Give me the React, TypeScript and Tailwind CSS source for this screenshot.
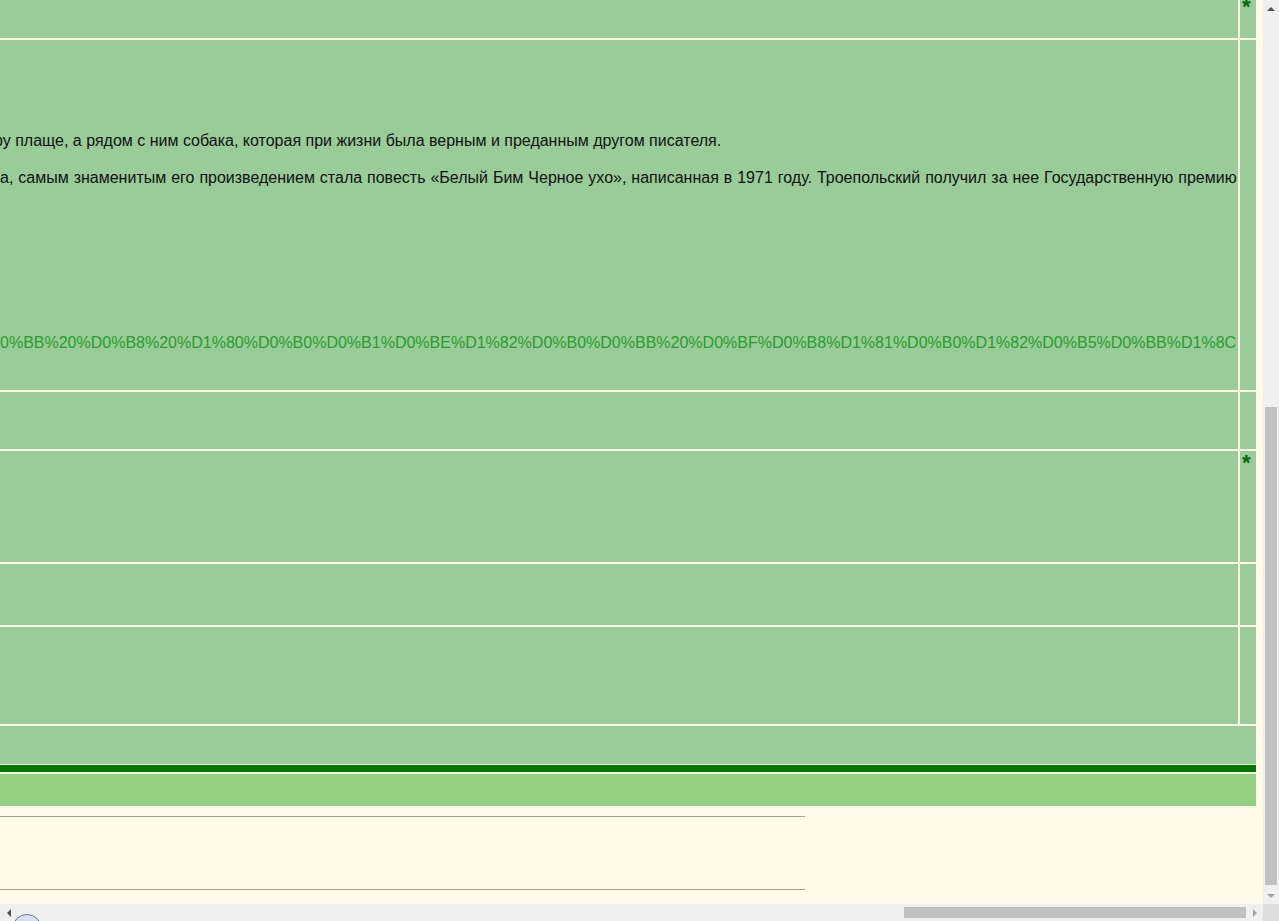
import React from 'react';

const cream = 'bg-[#fffbe6]';

const Star: React.FC<{ top: string }> = ({ top }) => (
  <span className={`absolute left-[2px] ${top} text-[22px] font-bold leading-none text-[#006600]`}>*</span>
);

const Row: React.FC<{ h: string; star?: boolean; children?: React.ReactNode }> = ({ h, star, children }) => (
  <div className={`flex gap-[2px] ${h}`}>
    <div className="flex-1 min-w-0 overflow-hidden bg-[#99cc99]">{children}</div>
    <div className="w-[16px] bg-[#99cc99] relative overflow-hidden">
      {star && <Star top="top-[1px]" />}
    </div>
  </div>
);

const App: React.FC = () => {
  return (
    <div className="w-[1279px] h-[921px] overflow-hidden flex flex-col relative" style={{ fontFamily: '"Liberation Sans", Arial, sans-serif' }}>
      <div className="flex flex-1 min-h-0">
        {/* Page content */}
        <div className={`flex-1 min-w-0 overflow-hidden ${cream}`}>
          <div className="w-[1256px] flex flex-col">
            {/* Main table */}
            <div className={`flex flex-col gap-[2px] ${cream}`}>
              <div className="flex gap-[2px] h-[38px]">
                <div className="flex-1 bg-[#99cc99]" />
                <div className="w-[16px] bg-[#99cc99] relative overflow-hidden">
                  <Star top="top-[-4px]" />
                </div>
              </div>
              <Row h="h-[350px]">
                <div className="text-[16px] text-[#111] whitespace-nowrap">
                  <p className="pt-[92px] ml-[-6px] leading-[18px]">
                    ру плаще, а рядом с ним собака, которая при жизни была верным и преданным другом писателя.
                  </p>
                  <p className="mt-[19px] leading-[18px] [word-spacing:0.5px]">
                    а, самым знаменитым его произведением стала повесть «Белый Бим Черное ухо», написанная в 1971 году. Троепольский получил за нее Государственную премию
                  </p>
                  <p className="mt-[147px] leading-[18px] text-[#2a9d2a]">
                    0%BB%20%D0%B8%20%D1%80%D0%B0%D0%B1%D0%BE%D1%82%D0%B0%D0%BB%20%D0%BF%D0%B8%D1%81%D0%B0%D1%82%D0%B5%D0%BB%D1%8C
                  </p>
                </div>
              </Row>
              <Row h="h-[57px]" />
              <Row h="h-[111px]" star />
              <Row h="h-[61px]" />
              <Row h="h-[97px]" />
              <div className="h-0" />
            </div>
            <div className="h-[38px] bg-[#99cc99]" />
            <div className="h-[1px]" />
            <div className="h-[7px] bg-[#007700]" />
            <div className="h-[2px]" />
            <div className="h-[32px] bg-[#93d080]" />
            <div className="w-[805px] mt-[10px] h-[74px] border-t border-b border-[#a59f98]" />
          </div>
        </div>
        {/* Vertical scrollbar */}
        <div className="w-[16px] bg-[#f0f0f0] flex flex-col items-center">
          <div className="h-[17px] flex items-center justify-center">
            <div className="w-0 h-0 border-l-[4px] border-r-[4px] border-b-[4px] border-l-transparent border-r-transparent border-b-[#505050]" />
          </div>
          <div className="flex-1 w-full relative">
            <div className="absolute left-[2px] right-[2px] top-[390px] bottom-[2px] bg-[#c1c1c1]" />
          </div>
          <div className="h-[17px] flex items-center justify-center">
            <div className="w-0 h-0 border-l-[4px] border-r-[4px] border-t-[4px] border-l-transparent border-r-transparent border-t-[#a3a3a3]" />
          </div>
        </div>
      </div>
      {/* Horizontal scrollbar */}
      <div className="h-[17px] flex">
        <div className="flex-1 bg-[#f0f0f0] flex items-center">
          <div className="w-[17px] flex items-center justify-center">
            <div className="w-0 h-0 border-t-[4px] border-b-[4px] border-r-[4px] border-t-transparent border-b-transparent border-r-[#505050]" />
          </div>
          <div className="flex-1 h-full relative">
            <div className="absolute left-[887px] right-[0px] top-[3px] bottom-[3px] bg-[#c1c1c1]" />
          </div>
          <div className="w-[17px] flex items-center justify-center">
            <div className="w-0 h-0 border-t-[4px] border-b-[4px] border-l-[4px] border-t-transparent border-b-transparent border-l-[#a3a3a3]" />
          </div>
        </div>
        <div className="w-[16px] bg-[#dcdcdc]" />
      </div>
      <div className="absolute left-[12px] top-[914px] w-[30px] h-[30px] rounded-full border border-[#5a7a9a] bg-gradient-to-b from-[#dfe8f2] to-[#aabdd2]" />
    </div>
  );
};

export default App;
